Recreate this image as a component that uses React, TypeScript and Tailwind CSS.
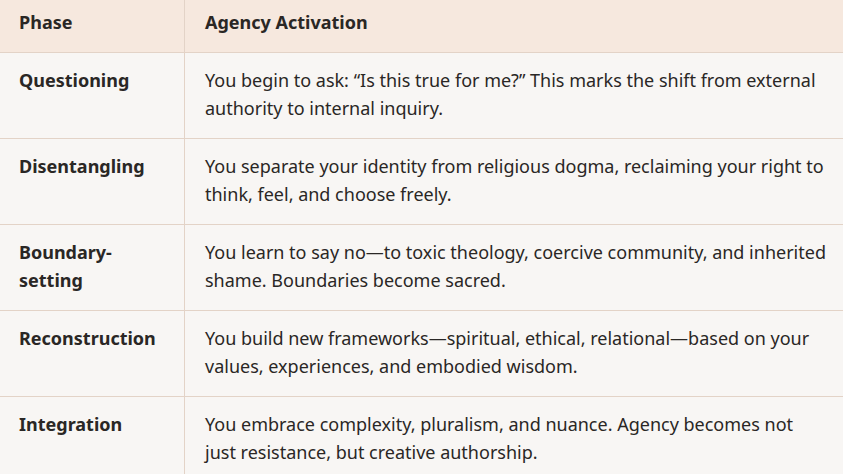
import React from "react";

const rows: [string, string][] = [
  ["Questioning", "You begin to ask: “Is this true for me?” This marks the shift from external authority to internal inquiry."],
  ["Disentangling", "You separate your identity from religious dogma, reclaiming your right to think, feel, and choose freely."],
  ["Boundary-setting", "You learn to say no—to toxic theology, coercive community, and inherited shame. Boundaries become sacred."],
  ["Reconstruction", "You build new frameworks—spiritual, ethical, relational—based on your values, experiences, and embodied wisdom."],
  ["Integration", "You embrace complexity, pluralism, and nuance. Agency becomes not just resistance, but creative authorship."],
];

export default function App() {
  return (
    <div className="w-[843px] h-[474px] overflow-hidden bg-[#f8f6f4] text-[#2a2725] text-[18px] leading-[28px]" style={{ fontFamily: "'Noto Sans', sans-serif" }}>
      <div className="grid grid-cols-[185px_1fr]">
        <div className="bg-[#f6e8de] border-b border-r border-[#e3d3c7] pl-[19px] pt-[8px] pb-[16px] font-bold">Phase</div>
        <div className="bg-[#f6e8de] border-b border-[#e3d3c7] pl-[20px] pt-[8px] pb-[16px] font-bold">Agency Activation</div>
        {rows.map(([p, d], i) => (
          <React.Fragment key={i}>
            <div className="border-b border-r border-[#e3d3c7] pl-[19px] pr-[20px] pt-[13px] pb-[16px] font-bold">{p}</div>
            <div className="border-b border-[#e3d3c7] pl-[20px] pr-[17px] pt-[13px] pb-[16px]">{d}</div>
          </React.Fragment>
        ))}
      </div>
    </div>
  );
}
